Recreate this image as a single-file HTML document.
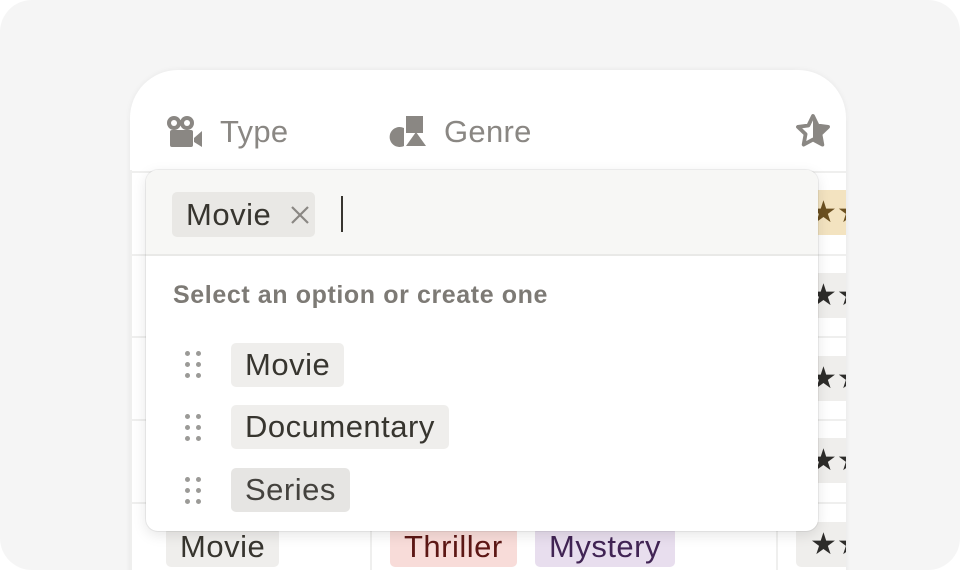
<!DOCTYPE html>
<html><head><meta charset="utf-8"><style>
*{margin:0;padding:0;box-sizing:border-box}
html,body{width:960px;height:570px;overflow:hidden;background:#fff}
body{font-family:"Liberation Sans",sans-serif;position:relative}
.outer{position:absolute;left:0;top:0;width:960px;height:570px;background:#f5f5f5;border-radius:32px}
.card{position:absolute;left:130px;top:70px;width:716px;height:520px;background:#fff;border-radius:48px 48px 0 0;box-shadow:0 0 6px rgba(0,0,0,0.06);overflow:hidden}
.hl{position:absolute;left:0;width:716px;height:2px;background:#efefee}
.vl{position:absolute;width:2px;background:#efefee}
.hdr{position:absolute;top:44px;font-size:31px;color:#8a8783;line-height:36px;letter-spacing:0.3px}
.tag{position:absolute;height:44px;line-height:44px;font-size:31px;letter-spacing:0.5px;color:#37352f;background:#efeeec;border-radius:5px;padding:0 14px;white-space:nowrap}
.star{position:absolute;left:666px;width:60px;height:45px;border-radius:5px;background:#efeeec;font-size:30px;line-height:45px;padding-left:14px;color:#2d2c2a;white-space:nowrap;overflow:hidden}
.dd{position:absolute;left:146px;top:170px;width:672px;height:361px;background:#fff;border-radius:12px;box-shadow:0 0 0 1px rgba(0,0,0,0.06),0 4px 14px rgba(0,0,0,0.10);overflow:hidden}
.top{position:absolute;left:0;top:0;width:672px;height:86px;background:#f7f7f5;border-bottom:2px solid #e9e9e7}
.handle{position:absolute;left:39px;width:16px;height:28px}
.handle i{position:absolute;width:5px;height:5px;border-radius:50%;background:#9b9a97}
</style></head><body>
<div class="outer"></div>
<div class="card">
  <div class="hl" style="top:101px"></div>
  <div class="hl" style="top:184px"></div>
  <div class="hl" style="top:266px"></div>
  <div class="hl" style="top:349px"></div>
  <div class="hl" style="top:432px"></div>
  <div class="vl" style="left:0;top:100px;height:420px"></div>
  <div class="vl" style="left:240px;top:432px;height:90px"></div>
  <div class="vl" style="left:646px;top:100px;height:420px"></div>
  <svg style="position:absolute;left:35px;top:45px" width="40" height="34" viewBox="0 0 40 34">
    <circle cx="9" cy="8" r="7" fill="#8a8783"/><circle cx="9" cy="8" r="3" fill="#fff"/>
    <circle cx="22" cy="8" r="7" fill="#8a8783"/><circle cx="22" cy="8" r="3" fill="#fff"/>
    <rect x="5" y="15" width="23" height="17" rx="2" fill="#8a8783"/>
    <path d="M29 23 L37 16 V32 L29 27Z" fill="#8a8783"/>
  </svg>
  <div class="hdr" style="left:90px">Type</div>
  <svg style="position:absolute;left:259px;top:44px" width="40" height="34" viewBox="0 0 40 34">
    <rect x="17" y="2" width="17" height="17" fill="#8a8783"/>
    <path d="M15 14 A10 10 0 1 0 15 32Z" fill="#8a8783"/>
    <path d="M27 18 L37 32 H17Z" fill="#8a8783"/>
  </svg>
  <div class="hdr" style="left:314px">Genre</div>
  <svg style="position:absolute;left:664px;top:42px" width="38" height="38" viewBox="0 0 24 24">
    <path d="M12 2.5l2.9 6 6.6.9-4.8 4.6 1.2 6.6L12 17.4 6.1 20.6l1.2-6.6L2.5 9.4l6.6-.9z" fill="none" stroke="#8a8783" stroke-width="2.4" stroke-linejoin="round"/>
    <path d="M12 2.5l2.9 6 6.6.9-4.8 4.6 1.2 6.6L12 17.4z" fill="#8a8783"/>
  </svg>
  <div class="star" style="top:120px;background:#f3e3c0;color:#6b5020">★★</div>
  <div class="star" style="top:203px">★★</div>
  <div class="star" style="top:286px">★★</div>
  <div class="star" style="top:368px">★★</div>
  <div class="star" style="top:452px">★★</div>
  <div class="tag" style="left:36px;top:457px;height:40px;line-height:40px">Movie</div>
  <div class="tag" style="left:260px;top:457px;height:40px;line-height:40px;background:#f8dcd9;color:#5d1715">Thriller</div>
  <div class="tag" style="left:405px;top:457px;height:40px;line-height:40px;background:#e8deee;color:#412454">Mystery</div>
</div>
<div class="dd">
  <div class="top">
    <div class="tag" style="left:26px;top:22px;height:45px;line-height:45px;background:#e9e8e5;padding-right:44px">Movie</div>
    <svg style="position:absolute;left:144px;top:35px" width="20" height="20" viewBox="0 0 20 20"><path d="M2 2L18 18M18 2L2 18" stroke="#8a8783" stroke-width="2.2"/></svg>
    <div style="position:absolute;left:195px;top:26px;width:2px;height:36px;background:#37352f"></div>
  </div>
  <div style="position:absolute;left:27px;top:111px;font-size:25px;color:#7d7a75;font-weight:bold;letter-spacing:0.6px;white-space:nowrap">Select an option or create one</div>
  <div class="handle" style="top:181px"><i style="left:0;top:0"></i><i style="left:11px;top:0"></i><i style="left:0;top:11px"></i><i style="left:11px;top:11px"></i><i style="left:0;top:22px"></i><i style="left:11px;top:22px"></i></div>
  <div class="tag" style="left:85px;top:173px">Movie</div>
  <div class="handle" style="top:244px"><i style="left:0;top:0"></i><i style="left:11px;top:0"></i><i style="left:0;top:11px"></i><i style="left:11px;top:11px"></i><i style="left:0;top:22px"></i><i style="left:11px;top:22px"></i></div>
  <div class="tag" style="left:85px;top:235px">Documentary</div>
  <div class="handle" style="top:307px"><i style="left:0;top:0"></i><i style="left:11px;top:0"></i><i style="left:0;top:11px"></i><i style="left:11px;top:11px"></i><i style="left:0;top:22px"></i><i style="left:11px;top:22px"></i></div>
  <div class="tag" style="left:85px;top:298px;background:#e6e5e3;color:#44423e">Series</div>
</div>
</body></html>
